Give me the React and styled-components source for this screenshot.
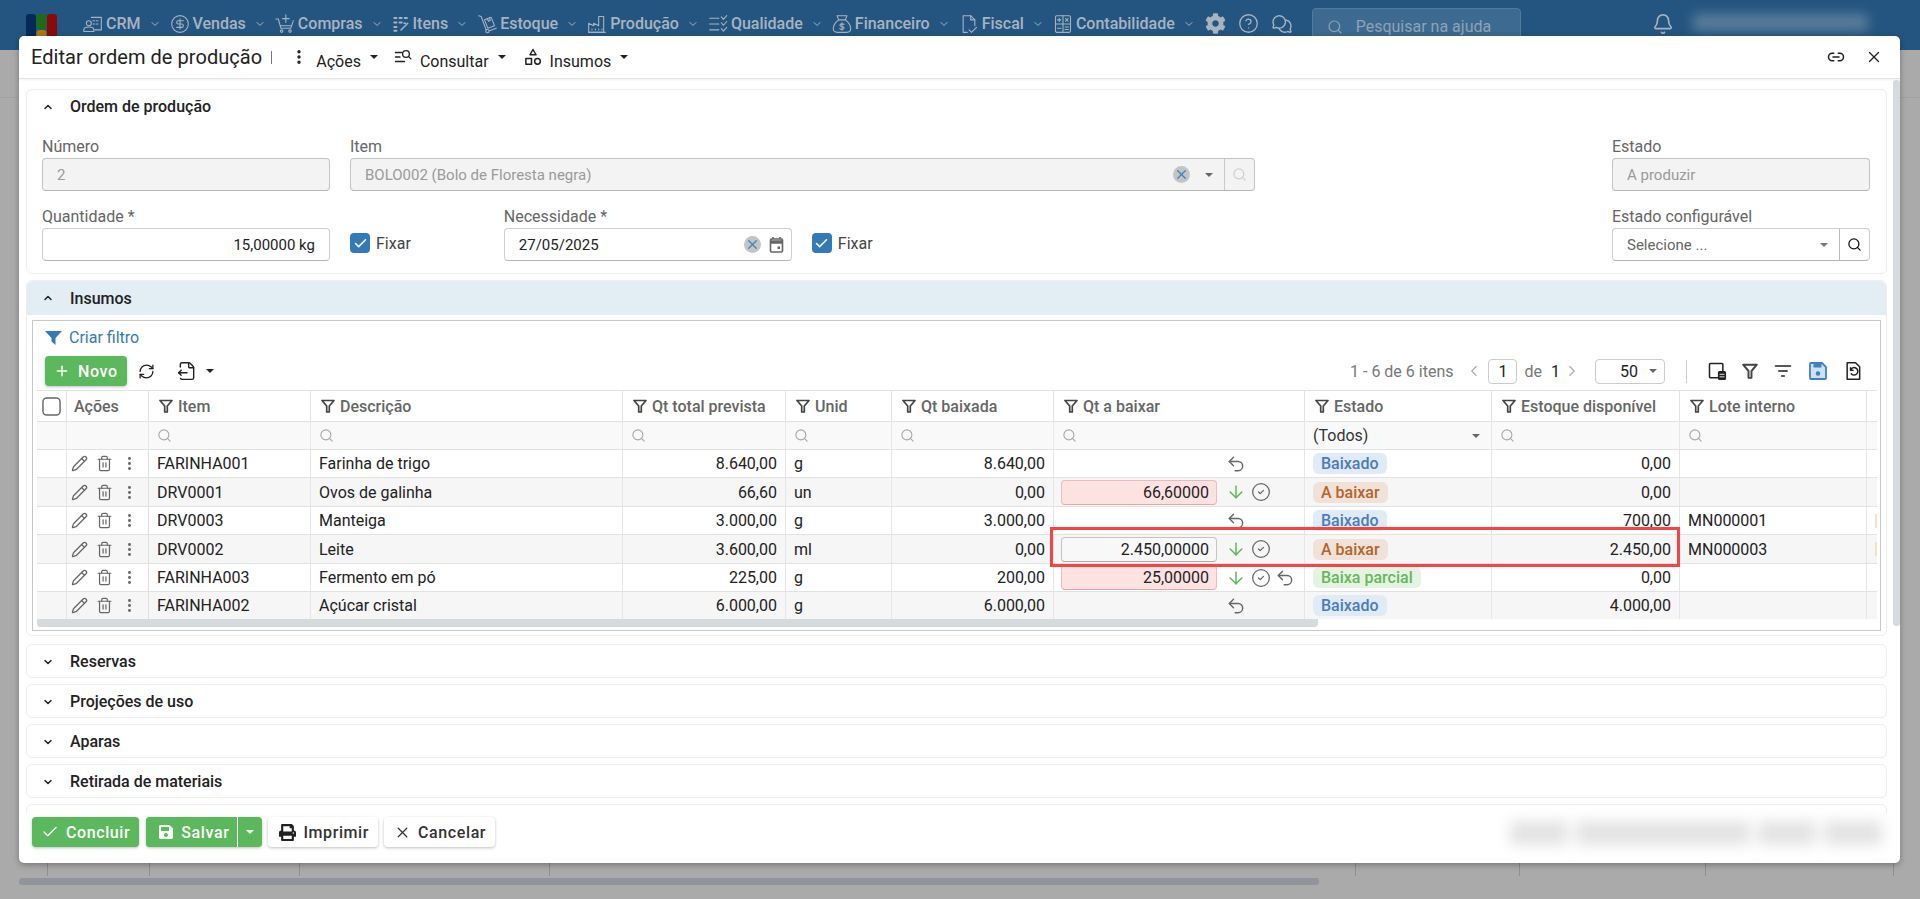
import styled, { createGlobalStyle } from 'styled-components';
import {
  Bell, Check, ChevronDown, ChevronLeft, ChevronRight, ChevronUp, CircleDollarSign, CircleHelp,
  EllipsisVertical, FileOutput, Link2, Pencil, Plus, RefreshCw, Search, Trash2, Undo2, X, ArrowDown, CircleCheck,
} from 'lucide-react';
import { FaCog, FaPrint, FaSave } from 'react-icons/fa';
import { PiChatsCircle } from 'react-icons/pi';

const GlobalStyle = createGlobalStyle`
  html, body { margin: 0; padding: 0; height: 100%; overflow: hidden; }
  body { background: #aaaaaa; font-family: Roboto, "Liberation Sans", sans-serif; font-size: 16px; color: #222; }
  * { box-sizing: border-box; }
`;

const COLS = '30px 82px 162px 312px 163px 106px 162px 251px 187px 188px 187px 10px';

const Page = styled.div`
  position: relative;
  width: 1920px;
  height: 899px;
  overflow: hidden;
`;

const TopBar = styled.header`
  display: flex;
  align-items: center;
  height: 50px;
  padding: 0 0 3px 26px;
  background: #245580;
  color: #a7b4c0;
`;

const Logo = styled.svg`
  width: 31px;
  height: 36px;
  flex: none;
  margin: 17px 26px 0 0;
`;

const Nav = styled.nav`
  display: flex;
  align-items: center;
  gap: 9px;
`;

const NavItem = styled.span`
  display: flex;
  align-items: center;
  gap: 3px;
  font-weight: 500;
  white-space: nowrap;
  svg.chev { margin-left: 5px; }
`;

const TopIcons = styled.div`
  display: flex;
  align-items: center;
  gap: 12px;
  margin-left: 10px;
`;

const HelpSearch = styled.div`
  display: flex;
  align-items: center;
  gap: 13px;
  width: 209px;
  height: 38px;
  margin: 6px 0 0 19px;
  padding-left: 14px;
  border: 1px solid #54799a;
  border-radius: 4px;
  background: #3d6a90;
  color: #8ea3b6;
`;

const BellSlot = styled.div`
  display: flex;
  margin-left: 131px;
`;

const UserBlur = styled.div`
  width: 175px;
  height: 17px;
  margin: 0 0 2px 19px;
  border-radius: 3px;
  background: #5a7d9b;
  filter: blur(6px);
`;

const BackTable = styled.div`
  display: grid;
  grid-template-columns: 48px 102px 150px 250px 806px 164px 186px 188px 1fr;
  height: 826px;
  padding-top: 47px;
  background-image: linear-gradient(#a0a0a0, #a0a0a0);
  background-size: 100% 1px;
  background-position: 0 47px;
  background-repeat: no-repeat;
`;

const BackCell = styled.div`
  border-right: 1px solid #8f8f8f;
`;

const BackScroll = styled.div`
  width: 1300px;
  height: 7px;
  margin: 2px 0 0 19px;
  border-radius: 3px;
  background: #8f959a;
`;

const Modal = styled.section`
  position: absolute;
  left: 19px;
  top: 36px;
  display: flex;
  flex-direction: column;
  width: 1881px;
  height: 827px;
  border-radius: 5px;
  background: #fff;
  box-shadow: 0 2px 6px rgba(0, 0, 0, 0.3);
`;

const ModalHead = styled.div`
  display: flex;
  align-items: center;
  flex: none;
  height: 43px;
  padding: 0 12px;
  border-bottom: 1px solid #e4e4e4;
  box-shadow: 0 1px 2px rgba(0, 0, 0, 0.05);
`;

const ModalTitle = styled.h1`
  margin: 0;
  font-size: 20px;
  font-weight: 400;
  line-height: 28px;
  color: #222;
  letter-spacing: 0.05px;
`;

const TitleBar = styled.span`
  width: 1px;
  height: 13px;
  margin: 0 18px 0 9px;
  background: #777;
`;

const HeadMenu = styled.button`
  display: flex;
  align-items: center;
  height: 28px;
  margin-right: ${p => p.$after}px;
  padding: 0;
  border: 0;
  background: none;
  font: 400 16px Roboto, sans-serif;
  color: #222;
  svg { margin: -1px 8px 0 0; }
  span.label { margin-top: 8px; }
`;

const Caret = styled.i`
  display: inline-block;
  width: 0;
  height: 0;
  margin-left: ${p => p.$gap ?? 9}px;
  border-left: 4px solid transparent;
  border-right: 4px solid transparent;
  border-top: 4px solid ${p => p.$color || '#222'};
`;

const HeadActions = styled.div`
  display: flex;
  align-items: center;
  gap: 20px;
  margin-left: auto;
  padding-right: 5px;
`;

const Body = styled.div`
  position: relative;
  flex: 1;
  min-height: 0;
  overflow: hidden;
  padding: 10px 13px 0 7px;
  display: flex;
  flex-direction: column;
  gap: 6px;
`;

const ScrollThumb = styled.div`
  position: absolute;
  right: 0;
  top: 1px;
  width: 7px;
  height: 546px;
  border-radius: 3px;
  background: #d5dadd;
`;

const Panel = styled.div`
  flex: none;
  border: 1px solid #eeeeee;
  border-radius: 6px;
  margin-bottom: ${p => p.$after || 0}px;
  height: ${p => p.$h}px;
`;

const PanelHead = styled.div`
  display: flex;
  align-items: center;
  gap: 16px;
  height: ${p => p.$h || 33}px;
  padding-left: 15px;
  border-radius: 6px 6px 0 0;
  background: ${p => (p.$active ? '#e2eef3' : 'transparent')};
  font-weight: 500;
  color: #222;
`;

const FormRow = styled.div`
  display: flex;
  align-items: flex-end;
  padding: 0 16px 0 15px;
  margin-top: ${p => p.$top}px;
`;

const Field = styled.div`
  display: flex;
  flex-direction: column;
  width: ${p => p.$w}px;
  margin-left: ${p => p.$left ?? 0}px;
  flex: none;
  ${p => p.$right && 'margin-left: auto;'}
`;

const Label = styled.label`
  height: 22px;
  line-height: 22px;
  color: #666;
`;

const Input = styled.div`
  display: flex;
  align-items: center;
  justify-content: ${p => (p.$end ? 'flex-end' : 'flex-start')};
  height: 33px;
  padding: 0 14px;
  border: 1px solid ${p => (p.$off ? '#c4c4c4' : '#cfcfcf')};
  border-bottom-color: #b5b5b5;
  border-radius: 4px;
  background: ${p => (p.$off ? '#f3f3f3' : '#fff')};
  color: ${p => (p.$off ? '#9a9a9a' : p.$muted ? '#666' : '#222')};
  font-size: 15px;
  white-space: nowrap;
  overflow: hidden;
`;

const InputTail = styled.span`
  display: flex;
  align-items: center;
  gap: ${p => p.$gap || 0}px;
  margin-left: auto;
  margin-right: ${p => p.$pull || 0}px;
`;

const ClearBtn = styled.span`
  display: flex;
  align-items: center;
  justify-content: center;
  width: 17px;
  height: 17px;
  border-radius: 50%;
  background: #c4c4c4;
  color: #3f7fc4;
`;

const AddonCell = styled.span`
  display: flex;
  align-items: center;
  justify-content: center;
  width: 30px;
  height: 33px;
  margin-right: -14px;
  margin-left: 11px;
  border-left: 1px solid ${p => (p.$off ? '#c9c9c9' : '#bbb')};
  color: ${p => (p.$off ? '#cfcfcf' : '#111')};
`;

const CheckWrap = styled.label`
  display: flex;
  align-items: center;
  gap: 6px;
  height: 20px;
  margin: 0 0 8px 20px;
  color: #444;
`;

const CheckBox = styled.span`
  display: flex;
  align-items: center;
  justify-content: center;
  width: 20px;
  height: 20px;
  border-radius: 4px;
  background: #337ab7;
  color: #fff;
`;

const GridBox = styled.div`
  height: 311px;
  margin: 5px 5px 0;
  padding: 0 4px;
  border: 1px solid #c8c8c8;
`;

const CreateFilter = styled.div`
  display: flex;
  align-items: center;
  gap: 7px;
  height: 33px;
  padding-left: 8px;
  color: #337ab7;
`;

const GridTools = styled.div`
  display: flex;
  align-items: center;
  height: 30px;
  margin: 2px 0 4px;
  padding-left: 8px;
`;

const GreenButton = styled.button`
  display: flex;
  align-items: center;
  gap: ${p => p.$gap ?? 6}px;
  height: 30px;
  padding: 0 ${p => p.$pad ?? 10}px;
  border: 0;
  border-radius: 4px;
  background: #5cb85c;
  box-shadow: 0 1px 3px rgba(0, 0, 0, 0.25);
  color: #fff;
  font: 500 16px Roboto, sans-serif;
  letter-spacing: 0.6px;
`;

const ToolIcon = styled.span`
  display: flex;
  align-items: center;
  margin-left: ${p => p.$left}px;
  color: ${p => p.$color || '#222'};
`;

const Pager = styled.div`
  display: flex;
  align-items: center;
  margin-left: auto;
  padding-right: 13px;
  color: #777;
`;

const PagerPrev = styled(ChevronLeft)`
  margin-left: 12px;
`;

const PagerLast = styled.span`
  margin: 0 3px 0 9px;
  color: #222;
`;

const PageBox = styled.span`
  display: flex;
  align-items: center;
  justify-content: center;
  width: 29px;
  height: 25px;
  margin: 0 7px 0 5px;
  border: 1px solid #ccc;
  border-radius: 4px;
  color: #222;
`;

const PageSize = styled.span`
  display: flex;
  align-items: center;
  width: 70px;
  height: 25px;
  margin-left: 14px;
  padding-left: 24px;
  border: 1px solid #ccc;
  border-radius: 4px;
  color: #222;
`;

const PagerRule = styled.span`
  width: 1px;
  height: 23px;
  margin: 0 20px 0 21px;
  background: #ccc;
`;

const PagerIcons = styled.span`
  display: flex;
  align-items: center;
  gap: 15px;
  color: #222;
`;

const Table = styled.div`
  position: relative;
  width: 1840px;
  overflow: hidden;
`;

const Row = styled.div`
  display: grid;
  grid-template-columns: ${COLS};
  height: ${p => p.$h}px;
  border-top: 1px solid #e2e2e2;
  background: ${p => p.$bg || '#fff'};
`;

const HeadCell = styled.div`
  display: flex;
  align-items: center;
  gap: 5px;
  min-width: 0;
  padding-left: ${p => p.$pad ?? 10}px;
  border-right: 1px solid #e2e2e2;
  font-weight: 500;
  color: #666;
  white-space: nowrap;
`;

const FilterCell = styled.div`
  display: flex;
  align-items: center;
  padding: 0 ${p => (p.$pad ? 8 : 0)}px;
  border-right: 1px solid #e8e8e8;
  color: #a8a8a8;
`;

const FilterSelect = styled.span`
  display: flex;
  align-items: center;
  justify-content: space-between;
  width: 100%;
  padding-right: 3px;
  color: #333;
`;

const Cell = styled.div`
  display: flex;
  align-items: center;
  justify-content: ${p => (p.$num ? 'flex-end' : 'flex-start')};
  min-width: 0;
  padding: 0 ${p => p.$pad ?? 8}px;
  border-right: 1px solid ${p => (p.$strong ? '#e0e0e0' : '#e6e6e6')};
  color: #222;
  white-space: nowrap;
  overflow: hidden;
`;

const RowTools = styled.div`
  display: flex;
  align-items: center;
  gap: 8px;
  color: #666;
`;

const QtyInput = styled.span`
  display: flex;
  align-items: center;
  justify-content: flex-end;
  flex: none;
  width: 156px;
  height: 25px;
  padding-right: 7px;
  border: 1px solid ${p => (p.$warn ? '#eebbbb' : '#c4c4c4')};
  border-bottom-color: ${p => (p.$warn ? '#e2a8a8' : '#aaa')};
  border-radius: 4px;
  background: ${p => (p.$warn ? '#fde2e2' : '#f8f8f8')};
`;

const QtyActions = styled.span`
  display: flex;
  align-items: center;
  gap: 4.5px;
  margin-left: ${p => (p.$alone ? 165 : 9)}px;
  color: #666;
`;

const badgeColors = {
  'Baixado': ['#e1ebf7', '#4a7cc1'],
  'A baixar': ['#f0e2d8', '#b5652a'],
  'Baixa parcial': ['#e5f4e2', '#67b75c'],
};

const Badge = styled.span`
  display: inline-flex;
  align-items: center;
  height: 21px;
  padding: 0 8px;
  border-radius: 6px;
  background: ${p => badgeColors[p.$kind][0]};
  color: ${p => badgeColors[p.$kind][1]};
  font-weight: 500;
`;

const EdgeTag = styled.span`
  flex: none;
  width: 20px;
  height: 14px;
  background: #f7e0c4;
`;

const HScroll = styled.div`
  width: 1281px;
  height: 8px;
  border-radius: 0 0 4px 4px;
  background: #d5dadd;
`;

const Highlight = styled.div`
  position: absolute;
  left: 1013px;
  top: 137px;
  width: 630px;
  height: 40px;
  border: 3px solid #f44545;
  pointer-events: none;
`;

const Footer = styled.footer`
  display: flex;
  align-items: flex-start;
  flex: none;
  gap: 6px;
  height: 50px;
  padding: 4px 0 0 13px;
`;

const SplitButton = styled.span`
  display: flex;
  height: 30px;
  margin-left: 1px;
  border-radius: 4px;
  background: #5cb85c;
  box-shadow: 0 1px 3px rgba(0, 0, 0, 0.25);
`;

const SplitMain = styled(GreenButton)`
  padding: 0 8px 0 12px;
  box-shadow: none;
  border-right: 1px solid #fff;
  border-radius: 4px 0 0 4px;
`;

const SplitArrow = styled.span`
  display: flex;
  align-items: center;
  justify-content: center;
  width: 24px;
`;

const PlainButton = styled.button`
  display: flex;
  align-items: center;
  gap: ${p => p.$gap}px;
  height: 30px;
  padding: 0 9px 0 ${p => p.$pad}px;
  border: 0;
  border-radius: 4px;
  background: #fff;
  box-shadow: 0 1px 3px rgba(0, 0, 0, 0.25);
  color: #333;
  font: 500 16px Roboto, sans-serif;
  letter-spacing: 0.6px;
`;

const FooterBlur = styled.div`
  display: flex;
  gap: 8px;
  width: 372px;
  height: 24px;
  margin: 4px 18px 0 auto;
  filter: blur(7px);
`;

const BlurPiece = styled.span`
  flex: ${p => p.$grow};
  background: #e3e3e3;
`;

// desenhos que nao existem nos pacotes de icones
const Ico = ({ size = 20, children, sw = 1.3, fill = 'none' }) => (
  <svg width={size} height={size} viewBox="0 0 24 24" fill={fill} stroke="currentColor" strokeWidth={sw} strokeLinecap="round" strokeLinejoin="round">
    {children}
  </svg>
);

const CrmIcon = () => (
  <Ico>
    <path d="M10 4h12v15H14M12 8h2M16 8h2M12 12h2M16 12h2" />
    <circle cx="7" cy="11" r="3" />
    <path d="M1 21v-2c0-2 2-3.500 6-3.500 4 0 6 1.500 6 3.500v2z" />
  </Ico>
);

const CartIcon = () => (
  <Ico>
    <path d="M1 6h3l3 11h12l3-9M7 14h13" />
    <path d="M13 1v9M9 5.500h8" />
    <circle cx="8" cy="20.500" r="1.500" />
    <circle cx="18" cy="20.500" r="1.500" />
  </Ico>
);

const ItemsIcon = () => (
  <Ico sw={2.4} size={18}>
    <path d="M3 4h3M10 4h3M17 4h3M3 10h3M10 10h3M3 16h3M3 21h3" />
    <path d="M12 20l9-9M16 11h2" strokeWidth={2} />
  </Ico>
);

const StockIcon = () => (
  <Ico>
    <path d="M2 2l3 1 6 16" />
    <circle cx="12.500" cy="20.500" r="2" />
    <path d="M15 20l8-3" />
    <path d="M9 7l8-3 4 10-8 3z" />
    <path d="M12.500 5.700l1.200 3 2.300-.9-1.100-3" />
  </Ico>
);

const FactoryIcon = () => (
  <Ico>
    <path d="M2 22V11l6 3v-3l6 3V3h5l1 0v19z" />
    <path d="M6 18v1M10 18v1M14 18v1M18 18v1M2 22h20" />
  </Ico>
);

const QualityIcon = () => (
  <Ico>
    <path d="M2 5h11M2 12h11M2 19h11" />
    <path d="M16 3.500l2.500 3 4-4.500M16 10.500l2.500 3 4-4.500M16 17.500l2.500 3 4-4.500" />
  </Ico>
);

const MoneyBagIcon = () => (
  <Ico>
    <path d="M8 7L6 2h12l-2 5" />
    <path d="M8 7h8c4 3 6.500 7 6.500 10.500 0 3-2 4.500-5 4.500h-11c-3 0-5-1.500-5-4.500C1.500 14 4 10 8 7z" />
    <path d="M14.500 12.500c-1-1-5-1-5 1 0 2.200 5 1 5 3.300 0 2-4 2-5.200.8M12 10.500v9" />
  </Ico>
);

const FiscalIcon = () => (
  <Ico>
    <path d="M10 22H5V2h9l5 5v7" />
    <path d="M14 2v5h5" />
    <path d="M12 19l3 3 6-6" />
  </Ico>
);

const CalcIcon = () => (
  <Ico>
    <rect x="3" y="2" width="18" height="20" rx="1.500" />
    <path d="M3 12h18M12 2v20" />
    <path d="M5.500 7h4M7.500 5v4M15 5.500l3 3M18 5.500l-3 3M5.500 17h4M14.500 15.500h4M14.500 18.500h4" />
  </Ico>
);

const LookupIcon = () => (
  <Ico size={18} sw={1.8}>
    <path d="M2 6h8M2 12h6M2 18h12" />
    <circle cx="16" cy="8" r="4.500" />
    <path d="M19.500 11.500l3 3" />
  </Ico>
);

const ShapesIcon = () => (
  <Ico size={18} sw={2}>
    <path d="M12 2l4 7H8z" />
    <rect x="2.500" y="14" width="7.500" height="7.500" />
    <circle cx="18" cy="17.800" r="3.800" />
  </Ico>
);

const Funnel = ({ size = 14 }) => (
  <svg width={size} height={size} viewBox="0 0 14 14" fill="none" stroke="#444" strokeWidth="1.700" strokeLinejoin="round">
    <path d="M1 1.500h12L8.300 7v6H5.700V7z" />
  </svg>
);

const SolidFunnel = () => (
  <svg width="17" height="15" viewBox="0 0 17 15" fill="#337ab7">
    <path d="M0 1h17l-6.500 7v7l-4-3.500V8z" />
  </svg>
);

const CalendarIcon = () => (
  <svg width="15" height="17" viewBox="0 0 15 17" fill="none" stroke="#666" strokeWidth="1.600">
    <rect x="1.500" y="3" width="12" height="13" rx="1" />
    <path d="M1 6h13" strokeWidth="3.500" />
    <path d="M4 1v2M11 1v2" />
    <rect x="8.500" y="10.500" width="2.500" height="2.500" fill="#666" stroke="none" />
  </svg>
);

const ColumnsIcon = () => (
  <Ico size={20} sw={1.8}>
    <path d="M13 20H4a1 1 0 0 1-1-1V4a1 1 0 0 1 1-1h14a1 1 0 0 1 1 1v8" />
    <rect x="14" y="13" width="8" height="9" rx="1" fill="currentColor" />
    <path d="M15.500 16h5M15.500 19h5" stroke="#fff" strokeWidth="1" />
  </Ico>
);

const LinesIcon = () => (
  <Ico size={20} sw={2}>
    <path d="M3 6h18M7 12h10M10.500 18h3" />
  </Ico>
);

const BlueSave = () => (
  <svg width="20" height="20" viewBox="0 0 20 20">
    <path d="M2 3a1 1 0 0 1 1-1h11l4 4v11a1 1 0 0 1-1 1H3a1 1 0 0 1-1-1z" fill="#cfe0f0" stroke="#3b82c4" strokeWidth="1.800" />
    <rect x="5.500" y="2.500" width="8" height="4" fill="#3b82c4" />
    <circle cx="10" cy="12.500" r="2.300" fill="#3b82c4" />
  </svg>
);

const FileUndoIcon = () => (
  <Ico size={20} sw={1.8}>
    <path d="M5 2h10l5 5v15H5z" />
    <path d="M9 11a4.500 4.500 0 1 1 1 4.500M9 8v3h3" />
  </Ico>
);

const navItems = [
  ['CRM', <CrmIcon />],
  ['Vendas', <CircleDollarSign size={20} strokeWidth={1.300} />],
  ['Compras', <CartIcon />],
  ['Itens', <ItemsIcon />],
  ['Estoque', <StockIcon />],
  ['Produção', <FactoryIcon />],
  ['Qualidade', <QualityIcon />],
  ['Financeiro', <MoneyBagIcon />],
  ['Fiscal', <FiscalIcon />],
  ['Contabilidade', <CalcIcon />],
];

const columns = ['Item', 'Descrição', 'Qt total prevista', 'Unid', 'Qt baixada', 'Qt a baixar', 'Estado', 'Estoque disponível', 'Lote interno'];

const rows = [
  { code: 'FARINHA001', desc: 'Farinha de trigo', total: '8.640,00', unit: 'g', done: '8.640,00', state: 'Baixado', stock: '0,00', undo: true, h: 28 },
  { code: 'DRV0001', desc: 'Ovos de galinha', total: '66,60', unit: 'un', done: '0,00', qty: '66,60000', warn: true, state: 'A baixar', stock: '0,00', h: 29 },
  { code: 'DRV0003', desc: 'Manteiga', total: '3.000,00', unit: 'g', done: '3.000,00', state: 'Baixado', stock: '700,00', lot: 'MN000001', undo: true, h: 28 },
  { code: 'DRV0002', desc: 'Leite', total: '3.600,00', unit: 'ml', done: '0,00', qty: '2.450,00000', state: 'A baixar', stock: '2.450,00', lot: 'MN000003', h: 29 },
  { code: 'FARINHA003', desc: 'Fermento em pó', total: '225,00', unit: 'g', done: '200,00', qty: '25,00000', warn: true, undo: true, state: 'Baixa parcial', stock: '0,00', h: 28 },
  { code: 'FARINHA002', desc: 'Açúcar cristal', total: '6.000,00', unit: 'g', done: '6.000,00', state: 'Baixado', stock: '4.000,00', undo: true, h: 28 },
];

const collapsed = ['Reservas', 'Projeções de uso', 'Aparas', 'Retirada de materiais', 'Conciliações'];

const QtyCell = ({ row }) => (
  <Cell $pad={7}>
    {row.qty && <QtyInput $warn={row.warn}>{row.qty}</QtyInput>}
    <QtyActions $alone={!row.qty}>
      {row.qty && <ArrowDown size={20} strokeWidth={1.800} color="#5cb85c" />}
      {row.qty && <CircleCheck size={20} strokeWidth={1.500} />}
      {row.undo && <Undo2 size={20} strokeWidth={1.700} />}
    </QtyActions>
  </Cell>
);

export default function App() {
  return (
    <Page>
      <GlobalStyle />
      <TopBar>
        <Logo viewBox="0 0 31 36">
          <rect x="0" width="10" height="36" rx="3" fill="#022b57" />
          <rect x="10.500" width="10" height="15" rx="3" fill="#1f6a16" />
          <rect x="10.500" y="16" width="10" height="20" rx="3" fill="#a67a12" />
          <rect x="21" width="10" height="36" rx="3" fill="#8a0a0a" />
        </Logo>
        <Nav>
          {navItems.map(([label, icon]) => (
            <NavItem key={label}>
              {icon}
              {label}
              <ChevronDown className="chev" size={12} strokeWidth={2} />
            </NavItem>
          ))}
        </Nav>
        <TopIcons>
          <FaCog size={21} />
          <CircleHelp size={21} strokeWidth={1.500} />
          <PiChatsCircle size={22} />
        </TopIcons>
        <HelpSearch>
          <Search size={16} strokeWidth={1.800} />
          Pesquisar na ajuda
        </HelpSearch>
        <BellSlot>
          <Bell size={22} strokeWidth={1.800} />
        </BellSlot>
        <UserBlur />
      </TopBar>

      <BackTable>
        <BackCell />
        <BackCell />
        <BackCell />
        <BackCell />
        <BackCell />
        <BackCell />
        <BackCell />
        <BackCell />
        <div />
      </BackTable>
      <BackScroll />

      <Modal>
        <ModalHead>
          <ModalTitle>Editar ordem de produção</ModalTitle>
          <TitleBar />
          <HeadMenu $after={16}>
            <EllipsisVertical size={18} strokeWidth={2.500} />
            <span className="label">Ações</span>
            <Caret />
          </HeadMenu>
          <HeadMenu $after={18}>
            <LookupIcon />
            <span className="label">Consultar</span>
            <Caret />
          </HeadMenu>
          <HeadMenu $after={13}>
            <ShapesIcon />
            <span className="label">Insumos</span>
            <Caret />
          </HeadMenu>
          <HeadActions>
            <Link2 size={18} strokeWidth={2} />
            <X size={18} strokeWidth={1.800} />
          </HeadActions>
        </ModalHead>

        <Body>
          <ScrollThumb />
          <Panel $h={185}>
            <PanelHead>
              <ChevronUp size={12} strokeWidth={3} />
              Ordem de produção
            </PanelHead>
            <FormRow $top={13}>
              <Field $w={288}>
                <Label>Número</Label>
                <Input $off>2</Input>
              </Field>
              <Field $w={905} $left={20}>
                <Label>Item</Label>
                <Input $off>
                  BOLO002 (Bolo de Floresta negra)
                  <InputTail>
                    <ClearBtn><X size={15} strokeWidth={2} /></ClearBtn>
                    <Caret $gap={15} $color="#666" />
                    <AddonCell $off><Search size={15} /></AddonCell>
                  </InputTail>
                </Input>
              </Field>
              <Field $w={258} $right>
                <Label>Estado</Label>
                <Input $off>A produzir</Input>
              </Field>
            </FormRow>
            <FormRow $top={15}>
              <Field $w={288}>
                <Label>Quantidade *</Label>
                <Input $end>15,00000 kg</Input>
              </Field>
              <CheckWrap>
                <CheckBox><Check size={15} strokeWidth={2.500} /></CheckBox>
                Fixar
              </CheckWrap>
              <Field $w={288} $left={93}>
                <Label>Necessidade *</Label>
                <Input>
                  27/05/2025
                  <InputTail $pull={-7} $gap={8}>
                    <ClearBtn><X size={15} strokeWidth={2} /></ClearBtn>
                    <CalendarIcon />
                  </InputTail>
                </Input>
              </Field>
              <CheckWrap>
                <CheckBox><Check size={15} strokeWidth={2.500} /></CheckBox>
                Fixar
              </CheckWrap>
              <Field $w={258} $right>
                <Label>Estado configurável</Label>
                <Input $muted>
                  Selecione ...
                  <InputTail>
                    <Caret $color="#777" />
                    <AddonCell><Search size={15} strokeWidth={2} /></AddonCell>
                  </InputTail>
                </Input>
              </Field>
            </FormRow>
          </Panel>

          <Panel $h={356} $after={2}>
            <PanelHead $active $h={34}>
              <ChevronUp size={12} strokeWidth={3} />
              Insumos
            </PanelHead>
            <GridBox>
              <CreateFilter>
                <SolidFunnel />
                Criar filtro
              </CreateFilter>
              <GridTools>
                <GreenButton $gap={8} $pad={9}>
                  <Plus size={16} strokeWidth={2.200} />
                  Novo
                </GreenButton>
                <ToolIcon $left={11}><RefreshCw size={17} strokeWidth={1.800} /></ToolIcon>
                <ToolIcon $left={22}>
                  <FileOutput size={20} strokeWidth={1.700} />
                  <Caret $gap={9} />
                </ToolIcon>
                <Pager>
                  1 - 6 de 6 itens
                  <PagerPrev size={18} strokeWidth={1.500} color="#aaa" />
                  <PageBox>1</PageBox>
                  de
                  <PagerLast>1</PagerLast>
                  <ChevronRight size={18} strokeWidth={1.500} color="#aaa" />
                  <PageSize>
                    50
                    <Caret $gap={11} $color="#666" />
                  </PageSize>
                  <PagerRule />
                  <PagerIcons>
                    <ColumnsIcon />
                    <Funnel size={16} />
                    <LinesIcon />
                    <BlueSave />
                    <FileUndoIcon />
                  </PagerIcons>
                </Pager>
              </GridTools>
              <Table>
                <Row $h={31}>
                  <HeadCell $pad={5}>
                    <svg width="19" height="19" viewBox="0 0 20 20">
                      <rect x="1" y="1" width="18" height="18" rx="4" fill="#fff" stroke="#666" strokeWidth="1.500" />
                    </svg>
                  </HeadCell>
                  <HeadCell $pad={7}>Ações</HeadCell>
                  {columns.map(name => (
                    <HeadCell key={name}><Funnel />{name}</HeadCell>
                  ))}
                  <HeadCell />
                </Row>
                <Row $h={28} $bg="#f9f9f9">
                  <FilterCell />
                  <FilterCell />
                  {columns.map(name => (
                    <FilterCell key={name} $pad>
                      {name === 'Estado' ? (
                        <FilterSelect>(Todos)<Caret $color="#666" /></FilterSelect>
                      ) : (
                        <Search size={15} strokeWidth={1.800} />
                      )}
                    </FilterCell>
                  ))}
                  <FilterCell $pad><Search size={15} strokeWidth={1.800} /></FilterCell>
                </Row>
                {rows.map((row, i) => (
                  <Row key={row.code} $h={row.h} $bg={i % 2 ? '#f6f6f6' : '#fff'}>
                    <Cell />
                    <Cell $strong $pad={4}>
                      <RowTools>
                        <Pencil size={17} strokeWidth={1.800} />
                        <Trash2 size={17} strokeWidth={1.700} />
                        <EllipsisVertical size={17} strokeWidth={2.200} />
                      </RowTools>
                    </Cell>
                    <Cell>{row.code}</Cell>
                    <Cell>{row.desc}</Cell>
                    <Cell $num>{row.total}</Cell>
                    <Cell>{row.unit}</Cell>
                    <Cell $num>{row.done}</Cell>
                    <QtyCell row={row} />
                    <Cell><Badge $kind={row.state}>{row.state}</Badge></Cell>
                    <Cell $num>{row.stock}</Cell>
                    <Cell>{row.lot}</Cell>
                    <Cell>{row.lot && <EdgeTag />}</Cell>
                  </Row>
                ))}
                <HScroll />
                <Highlight />
              </Table>
            </GridBox>
          </Panel>

          {collapsed.map(title => (
            <Panel key={title} $h={34}>
              <PanelHead>
                <ChevronDown size={12} strokeWidth={3} />
                {title}
              </PanelHead>
            </Panel>
          ))}
        </Body>

        <Footer>
          <GreenButton $gap={7} $pad={9}>
            <Check size={18} strokeWidth={2} />
            Concluir
          </GreenButton>
          <SplitButton>
            <SplitMain $gap={7}>
              <FaSave size={16} />
              Salvar
            </SplitMain>
            <SplitArrow><Caret $gap={0} $color="#fff" /></SplitArrow>
          </SplitButton>
          <PlainButton $pad={11} $gap={7}>
            <FaPrint size={17} color="#222" />
            Imprimir
          </PlainButton>
          <PlainButton $pad={10} $gap={7}>
            <X size={17} strokeWidth={1.800} />
            Cancelar
          </PlainButton>
          <FooterBlur>
            <BlurPiece $grow={1} />
            <BlurPiece $grow={3} />
            <BlurPiece $grow={1} />
            <BlurPiece $grow={1} />
          </FooterBlur>
        </Footer>
      </Modal>
    </Page>
  );
}
